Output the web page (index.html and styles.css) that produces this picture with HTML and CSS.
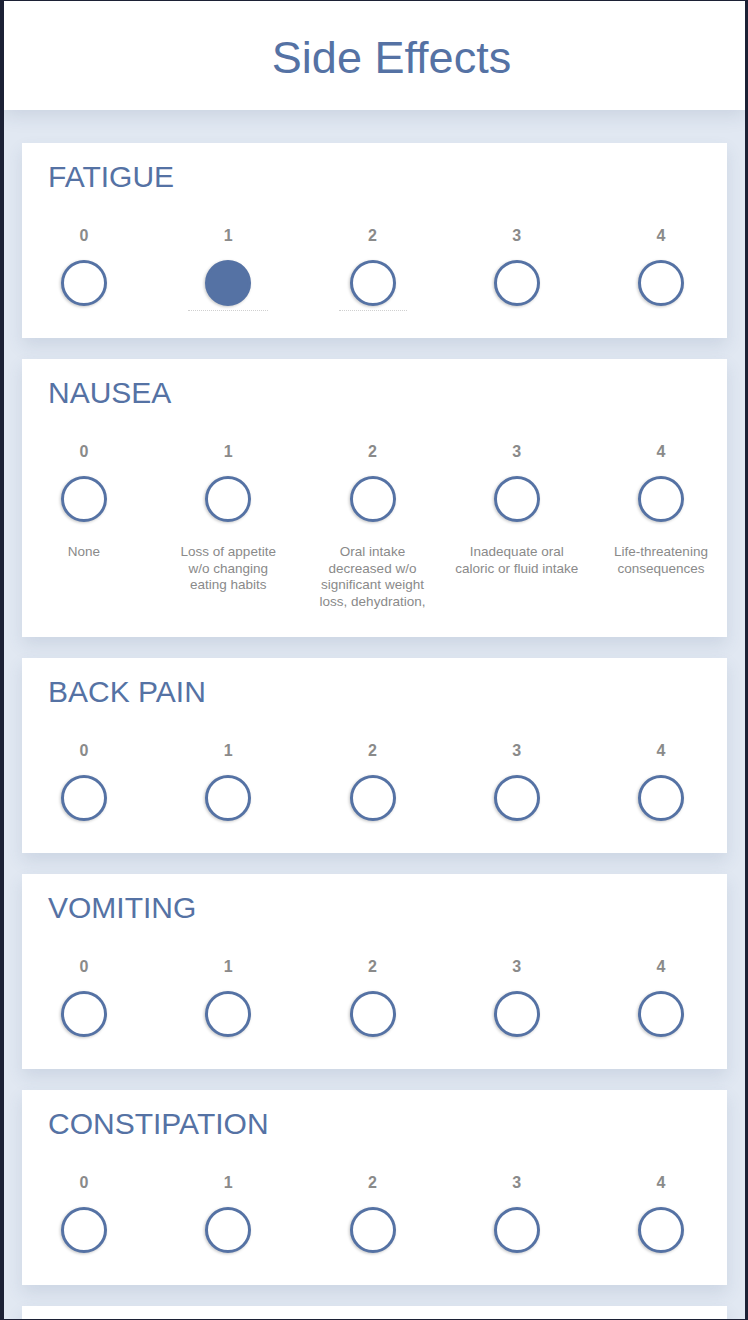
FILE: index.html
```html
<!DOCTYPE html>
<html lang="en">
<head>
<meta charset="utf-8">
<title>Side Effects</title>
<link rel="stylesheet" href="styles.css">
</head>
<body>
<div class="frame">
  <header class="topbar">
    <h1 class="page-title">Side Effects</h1>
  </header>
  <main class="list">
    <section class="card">
      <h2 class="card-title">FATIGUE</h2>
      <div class="grades">
        <div class="grade"><span class="num">0</span><span class="radio"></span></div>
        <div class="grade"><span class="num">1</span><span class="radio selected"></span>
          <span class="peek peek-wide"></span>
        </div>
        <div class="grade"><span class="num">2</span><span class="radio"></span>
          <span class="peek"></span>
        </div>
        <div class="grade"><span class="num">3</span><span class="radio"></span></div>
        <div class="grade"><span class="num">4</span><span class="radio"></span></div>
      </div>
    </section>

    <section class="card">
      <h2 class="card-title">NAUSEA</h2>
      <div class="grades">
        <div class="grade"><span class="num">0</span><span class="radio"></span>
          <p class="desc">None</p></div>
        <div class="grade"><span class="num">1</span><span class="radio"></span>
          <p class="desc">Loss of appetite<br>w/o changing<br>eating habits</p></div>
        <div class="grade"><span class="num">2</span><span class="radio"></span>
          <p class="desc">Oral intake<br>decreased w/o<br>significant weight<br>loss, dehydration,</p></div>
        <div class="grade"><span class="num">3</span><span class="radio"></span>
          <p class="desc">Inadequate oral<br>caloric or fluid intake</p></div>
        <div class="grade"><span class="num">4</span><span class="radio"></span>
          <p class="desc">Life-threatening<br>consequences</p></div>
      </div>
    </section>

    <section class="card">
      <h2 class="card-title">BACK PAIN</h2>
      <div class="grades">
        <div class="grade"><span class="num">0</span><span class="radio"></span></div>
        <div class="grade"><span class="num">1</span><span class="radio"></span></div>
        <div class="grade"><span class="num">2</span><span class="radio"></span></div>
        <div class="grade"><span class="num">3</span><span class="radio"></span></div>
        <div class="grade"><span class="num">4</span><span class="radio"></span></div>
      </div>
    </section>

    <section class="card">
      <h2 class="card-title">VOMITING</h2>
      <div class="grades">
        <div class="grade"><span class="num">0</span><span class="radio"></span></div>
        <div class="grade"><span class="num">1</span><span class="radio"></span></div>
        <div class="grade"><span class="num">2</span><span class="radio"></span></div>
        <div class="grade"><span class="num">3</span><span class="radio"></span></div>
        <div class="grade"><span class="num">4</span><span class="radio"></span></div>
      </div>
    </section>

    <section class="card">
      <h2 class="card-title">CONSTIPATION</h2>
      <div class="grades">
        <div class="grade"><span class="num">0</span><span class="radio"></span></div>
        <div class="grade"><span class="num">1</span><span class="radio"></span></div>
        <div class="grade"><span class="num">2</span><span class="radio"></span></div>
        <div class="grade"><span class="num">3</span><span class="radio"></span></div>
        <div class="grade"><span class="num">4</span><span class="radio"></span></div>
      </div>
    </section>

    <section class="card card-partial">
    </section>
  </main>
</div>
</body>
</html>
```

FILE: styles.css
```css
* {
  box-sizing: border-box;
}

html, body {
  margin: 0;
  padding: 0;
}

body {
  background: #1c2135;
  font-family: "Liberation Sans", Arial, sans-serif;
  height: 1320px;
  overflow: hidden;
  padding: 1px 3px 1px 4px;
}

.frame {
  height: 1318px;
  overflow: hidden;
  background: #e1e8f2;
  display: flex;
  flex-direction: column;
}

.topbar {
  flex: 0 0 109px;
  background: #ffffff;
  box-shadow: 0 5px 18px rgba(40, 60, 100, 0.13);
  position: relative;
  z-index: 1;
  padding: 35px 0 0 34px;
}

.page-title {
  margin: 0;
  font-weight: normal;
  font-size: 45px;
  line-height: 44px;
  color: #5572a4;
  text-align: center;
}

.list {
  padding: 33px 18px 0 18px;
  display: flex;
  flex-direction: column;
  gap: 21px;
}

.card {
  flex: 0 0 auto;
  background: #ffffff;
  box-shadow: 0 8px 16px rgba(60, 80, 120, 0.12);
  padding: 16px 6px 27px 2px;
}

.card-partial {
  height: 195px;
}

.card-title {
  margin: 0 0 31px 24px;
  font-weight: normal;
  font-size: 30px;
  line-height: 36px;
  color: #5572a4;
}

.grades {
  display: flex;
  justify-content: space-between;
  align-items: flex-start;
}

.grade {
  width: 120px;
  display: flex;
  flex-direction: column;
  align-items: center;
}

.num {
  font-size: 16px;
  line-height: 20px;
  font-weight: bold;
  color: #8a8a8a;
  margin-bottom: 14px;
}

.radio {
  width: 46px;
  height: 46px;
  border-radius: 50%;
  border: 3px solid #5572a4;
  background: #ffffff;
  box-shadow: -1px 1px 3px rgba(0, 0, 0, 0.22);
  margin-bottom: 5px;
}

.radio.selected {
  background: #5572a4;
}

.desc {
  margin: 17px 0 0 0;
  font-size: 13.5px;
  line-height: 16.5px;
  color: #8a8a8a;
  text-align: center;
  white-space: nowrap;
}

.peek {
  width: 68px;
  height: 1px;
  margin: -1px 0 0 0;
  border-top: 1px dotted #d0d0d0;
}

.peek-wide {
  width: 80px;
}
```
